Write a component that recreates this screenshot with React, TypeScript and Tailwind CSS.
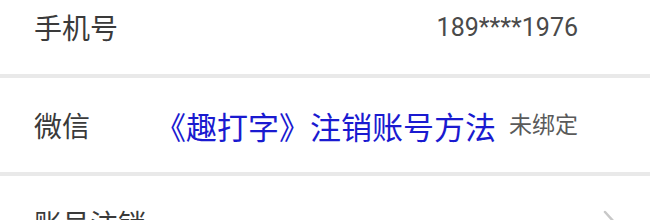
import React from 'react';

const rows = [
  { label: '手机号', value: '189****1976', valueClass: 'text-[25px] text-[#4a4a4a]' },
  { label: '微信', value: '未绑定', valueClass: 'text-[23px] text-[#5a5a5a]' },
  { label: '账号注销', value: null, valueClass: '' },
];

const App: React.FC = () => {
  return (
    <div className="w-[650px] h-[220px] overflow-hidden bg-white relative font-['Noto_Sans_CJK_SC','Noto_Sans',sans-serif]">
      <div className="-mt-[20px] flex flex-col">
        {rows.map((row) => (
          <div
            key={row.label}
            className="h-[98px] flex items-center justify-between pl-[34px] pr-[72px] border-b-4 border-[#e9e9e9]"
          >
            <span className="text-[28px] leading-none text-[#3a3a3a]">{row.label}</span>
            {row.value ? (
              <span className={`leading-none font-['Roboto','Noto_Sans_CJK_SC',sans-serif] ${row.valueClass}`}>
                {row.value}
              </span>
            ) : (
              <svg width="16" height="28" viewBox="0 0 16 28" className="-mr-[40px]" fill="none">
                <path d="M3 3 L13 14 L3 25" stroke="#c8c8c8" strokeWidth="2.5" strokeLinecap="round" strokeLinejoin="round" />
              </svg>
            )}
          </div>
        ))}
      </div>

      {/* watermark overlay */}
      <div className="absolute left-[155px] top-[110px] text-[31px] leading-none text-[#1a1ad0]">
        《趣打字》注销账号方法
      </div>
    </div>
  );
};

export default App;
